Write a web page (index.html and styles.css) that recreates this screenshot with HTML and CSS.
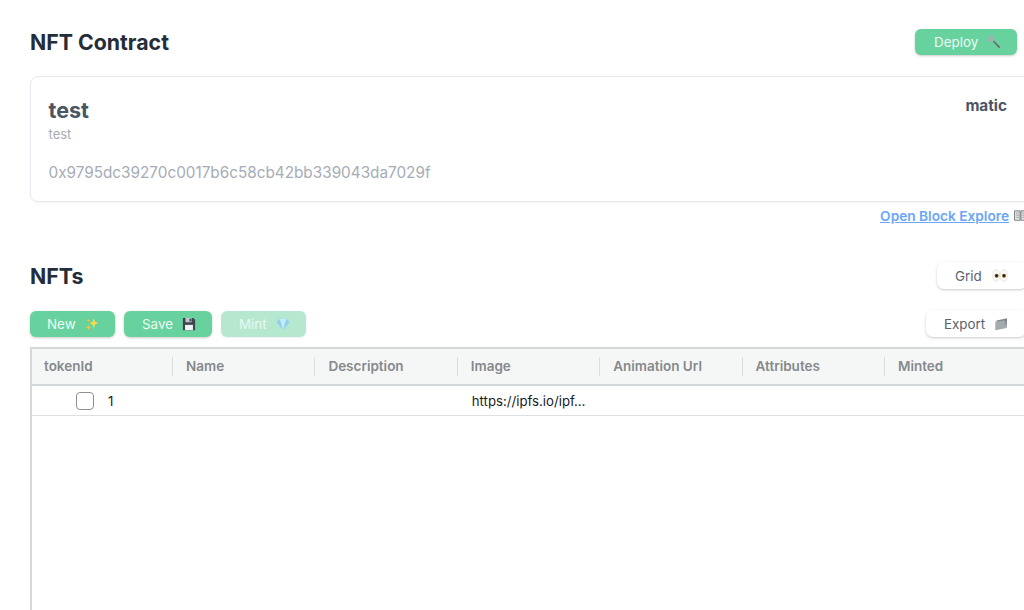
FILE: index.html
```html
<!DOCTYPE html>
<html lang="en">
<head>
<meta charset="utf-8">
<title>NFT Contract</title>
<link rel="stylesheet" href="styles.css">
</head>
<body>
<main class="page">
  <header class="head head-contract">
    <h1 class="title">NFT Contract</h1>
    <button class="btn btn-green btn-deploy">Deploy
      <svg class="ico" viewBox="0 0 16 16"><path d="M6.500 7.500 13.800 15l1.400-1.400L7.800 6.200z" fill="#6d6a6c"/><path d="M2 1.200 4.800 4 4 5 1.200 2.200C.3 4 .9 6 2.300 7c1.300.9 3 .9 4.200.2L8 5.800c.6-1.300.4-3-.6-4.200C6.200.4 4 .2 2 1.200z" fill="#a9adb0"/></svg>
    </button>
  </header>
  <section class="card">
    <div class="card-top">
      <div>
        <h2 class="card-name">test</h2>
        <p class="card-sub">test</p>
      </div>
      <span class="chain">matic</span>
    </div>
    <p class="addr">0x9795dc39270c0017b6c58cb42bb339043da7029f</p>
  </section>
  <div class="link-row"><a class="link" href="#">Open Block Explore</a><svg class="ico-book" viewBox="0 0 16 14"><path d="M1 1h6.500v11H1z" fill="#e4e5e4" stroke="#6d7377"/><path d="M8.500 1H15v11H8.500z" fill="#e4e5e4" stroke="#6d7377"/><path d="M2.500 3.500h4M2.500 6h4M2.500 8.500h4M9.500 3.500h4M9.500 6h4M9.500 8.500h4" stroke="#8b9094" stroke-width=".8"/></svg></div>
  <header class="head head-nfts">
    <h1 class="title">NFTs</h1>
    <button class="btn btn-white btn-grid">Grid
      <svg class="ico ico-eyes" viewBox="0 0 16 13"><ellipse cx="4.300" cy="6.500" rx="3.600" ry="5.800" fill="#fbfaf6" stroke="#dcdcd6" stroke-width=".7"/><ellipse cx="11.700" cy="6.500" rx="3.600" ry="5.800" fill="#fbfaf6" stroke="#dcdcd6" stroke-width=".7"/><circle cx="4.600" cy="6.700" r="2" fill="#7a5220"/><circle cx="12" cy="6.700" r="2" fill="#7a5220"/><circle cx="4.600" cy="6.700" r="1" fill="#141008"/><circle cx="12" cy="6.700" r="1" fill="#141008"/></svg>
    </button>
  </header>
  <div class="toolbar">
    <div class="actions">
      <button class="btn btn-green btn-new">New
        <svg class="ico" viewBox="0 0 16 16"><path d="M10 1l1.300 4.200L15 7l-3.700 1.800L10 13 8.700 8.800 5 7l3.700-1.800z" fill="#f5d94e"/><path d="M4 9l.8 2.200L7 12l-2.200.8L4 15l-.8-2.200L1 12l2.200-.8zM4 2l.5 1.500L6 4l-1.500.5L4 6l-.5-1.500L2 4l1.500-.5z" fill="#f7c93a"/></svg>
      </button>
      <button class="btn btn-green btn-save">Save
        <svg class="ico" viewBox="0 0 16 16"><path d="M1 1h12l2 2v12H1z" fill="#3f4650"/><path d="M4 1h7v5H4z" fill="#c4c8cc"/><path d="M8.500 2h2v3h-2z" fill="#3f4650"/><path d="M3.500 9h9v6h-9z" fill="#f2f3f3"/></svg>
      </button>
      <button class="btn btn-green btn-mint" disabled>Mint
        <svg class="ico" viewBox="0 0 16 16"><path d="M4 2h8l3.500 4L8 14.500.5 6z" fill="#8fd0f2"/><path d="M4 2l1.500 4L8 14.500 10.500 6 12 2z" fill="#c6ebfb"/></svg>
      </button>
    </div>
    <button class="btn btn-white btn-export">Export
      <svg class="ico" viewBox="0 0 16 16"><path d="M3 4l12-2.500L14.500 12 2 14.500z" fill="#7f8990"/><path d="M1.500 5.500 12 4l2.500 8.500L1.500 15z" fill="#a4abaf"/></svg>
    </button>
  </div>
  <section class="grid">
    <div class="grid-head">
      <div class="col">tokenId</div>
      <div class="col">Name</div>
      <div class="col">Description</div>
      <div class="col">Image</div>
      <div class="col">Animation Url</div>
      <div class="col">Attributes</div>
      <div class="col">Minted</div>
    </div>
    <div class="grid-row">
      <div class="cell cell-token"><span class="check"></span><span>1</span></div>
      <div class="cell"></div>
      <div class="cell"></div>
      <div class="cell"><span class="clip">https://ipfs.io/ipf…</span></div>
      <div class="cell"></div>
      <div class="cell"></div>
      <div class="cell"></div>
    </div>
  </section>
</main>
</body>
</html>
```

FILE: styles.css
```css
* { box-sizing: border-box; }
html, body { margin: 0; height: 610px; overflow: hidden; background: #fff; }
body { font-family: Inter, "Liberation Sans", sans-serif; color: #1f2937; }
.page { width: 1100px; padding: 29px 0 0 30px; }
.head { display: flex; justify-content: space-between; align-items: center; }
.head-contract { width: 987px; height: 26px; }
.head-nfts { width: 997px; height: 27px; margin-top: 36px; }
.title { margin: 0; font-size: 21.300px; line-height: 28px; font-weight: 700; color: #252d3a; }
.btn { display: inline-flex; align-items: center; justify-content: flex-start; gap: 9px; height: 26px; padding: 0 0 0 18px; border: 0; border-radius: 6px; font: 400 13.400px/20px Inter, "Liberation Sans", sans-serif; box-shadow: 0 1px 3px rgba(0,0,0,.14), 0 1px 2px rgba(0,0,0,.08); }
.btn-green { background: #68d29f; color: #ecfaf3; }
.btn-white { background: #fff; color: #5b6370; border-radius: 7px; }
.btn-mint { background: #b5e8cf; color: #e9f8f1; box-shadow: 0 1px 2px rgba(0,0,0,.06); }
.btn-deploy { width: 102px; margin-top: -1px; padding-left: 19px; }
.btn-grid { width: 90px; height: 27px; gap: 10px; }
.btn-export { width: 100px; height: 27px; }
.btn-new { width: 85px; padding-left: 17px; }
.btn-save { width: 88px; }
.btn-mint { width: 85px; }
.ico { width: 14px; height: 14px; flex: none; }
.ico-eyes { width: 16px; height: 13px; }
.card { width: 1010px; height: 126px; margin-top: 21px; padding: 19px 17.500px 0; border: 1px solid #e5e9f0; border-radius: 8px; box-shadow: 0 1px 2px rgba(0,0,0,.05); }
.card-top { display: flex; justify-content: space-between; align-items: flex-start; width: 958.500px; }
.card-name { margin: 0; font-size: 21.500px; line-height: 28px; font-weight: 700; color: #4b5563; }
.card-sub { margin: 2px 0 0; font-size: 13px; line-height: 16px; color: #a6acb6; }
.chain { font-size: 15.300px; line-height: 20px; font-weight: 700; color: #4b5563; }
.addr { margin: 21px 0 0; font-size: 15.300px; line-height: 20px; color: #a6acb6; }
.link-row { display: flex; align-items: center; gap: 4px; justify-content: flex-end; width: 998px; height: 20px; margin-top: 4px; white-space: nowrap; }
.link { font-size: 13.700px; line-height: 20px; font-weight: 600; color: #6aa5f8; text-decoration: underline; }
.ico-book { flex: none; width: 15px; height: 12px; }
.toolbar { display: flex; justify-content: space-between; align-items: center; width: 996px; height: 27px; margin-top: 21px; }
.actions { display: flex; gap: 9px; }
.grid { width: 1030px; height: 263px; margin-top: 10px; border: 2px solid #d5d8db; border-bottom: 0; border-right: 0; }
.grid-head { display: flex; height: 37px; background: #f5f7f7; border-bottom: 2px solid #d5d8db; }
.col { flex: 0 0 142.400px; padding-left: 13px; font-size: 13.500px; line-height: 35px; font-weight: 600; color: #85898d; border-left: 1px solid transparent; border-image: linear-gradient(to bottom, transparent 9px, #dcdfe1 9px, #dcdfe1 26px, transparent 26px) 1; }
.col:first-child { flex-basis: 140px; padding-left: 12px; border-left: 0; }
.grid-row { display: flex; height: 30px; border-bottom: 1px solid #dde0e2; }
.cell { flex: 0 0 142.400px; padding-left: 15px; font-size: 13.200px; line-height: 30px; color: #181d1f; min-width: 0; }
.cell-token { display: flex; flex-basis: 140px; align-items: center; gap: 14px; padding-left: 44px; }
.check { width: 18px; height: 18px; border: 1.500px solid #8d9196; border-radius: 4px; background: #fff; }
.clip { display: block; white-space: nowrap; }
```
